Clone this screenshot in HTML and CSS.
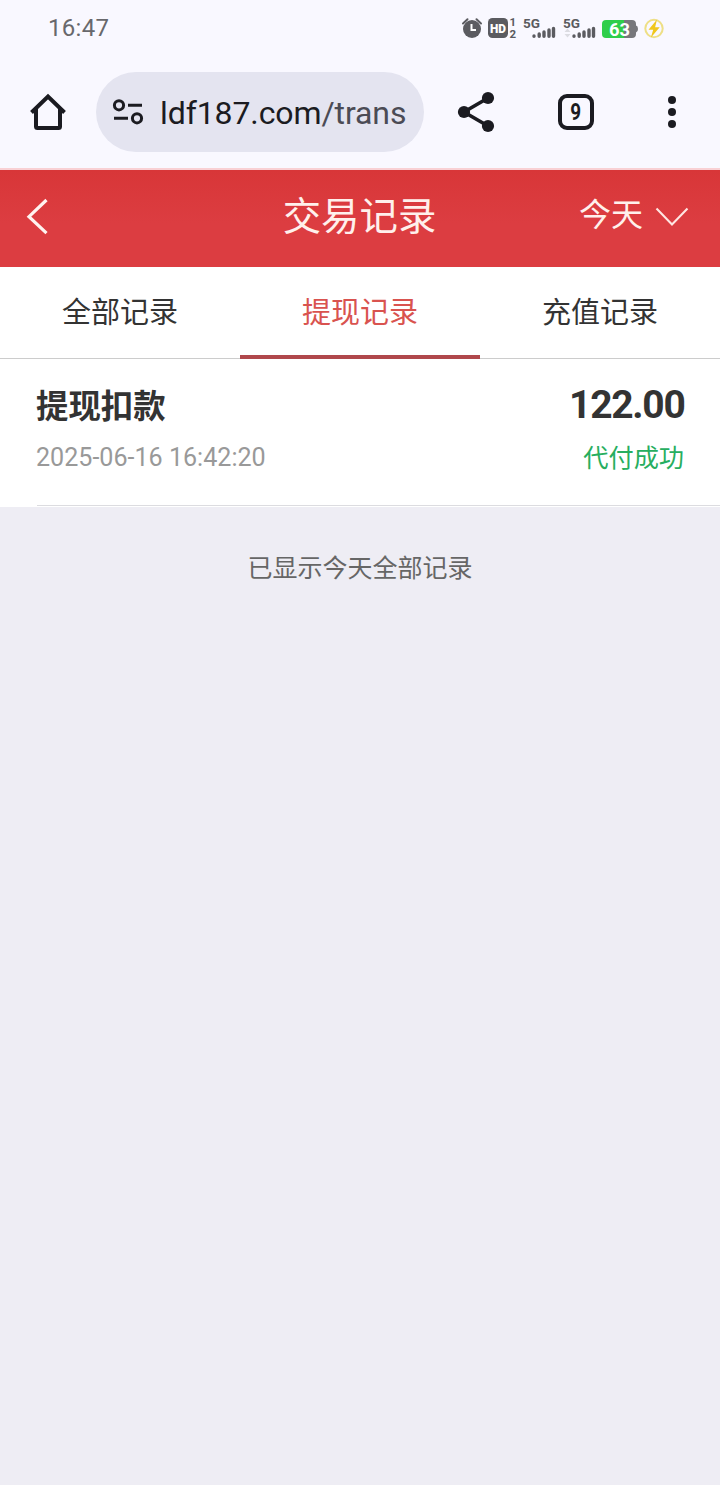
FILE: index.html
```html
<!DOCTYPE html>
<html lang="zh-CN">
<head>
    <meta charset="UTF-8">
    <meta name="viewport" content="width=device-width, initial-scale=1.0">
    <title>交易记录</title>
    <link rel="stylesheet" href="styles.css">
</head>
<body>

    <div class="status-bar">
        <span class="clock">16:47</span>
        <svg class="status-icons" width="206" height="32" viewBox="460 12 206 32">
            <!-- alarm -->
            <circle cx="472" cy="29" r="9" fill="#5b5b60"/>
            <path d="M463 23.5l4.5-4.2M481 23.5l-4.5-4.2" stroke="#5b5b60" stroke-width="2" stroke-linecap="round"/>
            <path d="M471.5 24v6h4.5" stroke="#fff" stroke-width="2" fill="none"/>
            <!-- HD -->
            <rect x="488" y="18" width="20" height="20" rx="4.5" fill="#5b5b60"/>
            <text class="hd" x="498" y="32.5" text-anchor="middle" textLength="16" lengthAdjust="spacingAndGlyphs">HD</text>
            <text class="sim" x="509.5" y="26">1</text>
            <text class="sim" x="509.5" y="37.5">2</text>
            <!-- signal 1 -->
            <text class="net" x="523" y="27.5" textLength="17" lengthAdjust="spacingAndGlyphs">5G</text>
            <path d="M534 36v.3M539.2 34v2.3M544 32v4.3M549 30v6.3M553.5 28.5v7.8" stroke="#5b5b60" stroke-width="3.4" stroke-linecap="round"/>
            <!-- signal 2 -->
            <text class="net" x="563" y="27.5" textLength="17" lengthAdjust="spacingAndGlyphs">5G</text>
            <path d="M564.5 32l3-3.5 3 3.5zM564.5 34l3 3.5 3-3.5z" fill="#dcdce2"/>
            <path d="M574 36v.3M579.2 34v2.3M584 32v4.3M589 30v6.3M593.5 28.5v7.8" stroke="#5b5b60" stroke-width="3.4" stroke-linecap="round"/>
            <!-- battery -->
            <path d="M624 20h8q4 0 4 4v1.5q2 .4 2 3.5t-2 3.5V34q0 4-4 4h-8z" fill="#77777c"/>
            <path d="M606 20h18v18h-18q-4 0-4-4V24q0-4 4-4z" fill="#2fce4a"/>
            <text class="battery" x="619.5" y="35.5" text-anchor="middle" textLength="21" lengthAdjust="spacingAndGlyphs">63</text>
            <circle cx="654" cy="28.5" r="8.7" fill="none" stroke="#eedf86" stroke-width="2"/>
            <path d="M657 19.5l-8.5 10.3h4.7l-2.4 8 8.9-10.5h-4.6z" fill="#f0c71c"/>
        </svg>
    </div>

    <div class="browser-bar">
        <svg class="home" width="40" height="40" viewBox="28 92 40 40">
            <path d="M31.5 112.5L48 96.5l16.5 16M36 109v17.5q0 1.5 1.5 1.5h21q1.5 0 1.5-1.5V109" fill="none" stroke="#1b1b21" stroke-width="4"/>
        </svg>
        <div class="url-box">
            <svg width="32" height="28" viewBox="112 98 32 28">
                <g fill="none" stroke="#1b1b21" stroke-width="3">
                    <circle cx="119" cy="105.3" r="4.6"/>
                    <circle cx="137" cy="118.3" r="4.6"/>
                    <path d="M128 105.3h14M114 118.3h14"/>
                </g>
            </svg>
            <span class="url">ldf187.com<span class="path">/trans</span></span>
        </div>
        <svg class="share" width="40" height="42" viewBox="456 91 40 42">
            <path d="M488 98l-24 14 24 14" fill="none" stroke="#1b1b21" stroke-width="3.6"/>
            <circle cx="488" cy="98" r="6.1" fill="#1b1b21"/>
            <circle cx="464" cy="112" r="6.1" fill="#1b1b21"/>
            <circle cx="488" cy="126" r="6.1" fill="#1b1b21"/>
        </svg>
        <div class="tab-count"><span>9</span></div>
        <div class="menu"><i></i><i></i><i></i></div>
    </div>

    <div class="app-header">
        <svg class="back" width="24" height="38" viewBox="26 198 24 38">
            <path d="M46.5 200L29 216.7l17.5 16.5" fill="none" stroke="#fff3f0" stroke-width="3.2"/>
        </svg>
        <span class="title">交易记录</span>
        <div class="filter">
            <span>今天</span>
            <svg width="34" height="20" viewBox="655 207 34 20">
                <path d="M656.5 208.5L672 224.5l15.5-16" fill="none" stroke="#ffe6e2" stroke-width="2.1"/>
            </svg>
        </div>
    </div>

    <div class="tabs">
        <div class="tab">全部记录</div>
        <div class="tab active">提现记录</div>
        <div class="tab">充值记录</div>
    </div>

    <div class="record">
        <div class="row">
            <span class="name">提现扣款</span>
            <span class="amount">122.00</span>
        </div>
        <div class="row">
            <span class="date">2025-06-16 16:42:20</span>
            <span class="state">代付成功</span>
        </div>
    </div>

    <div class="list-end">已显示今天全部记录</div>

</body>
</html>
```
FILE: styles.css
```css
* { box-sizing: border-box; }
body { background: #eeedf4; color: #333; font-family: Roboto, "Noto Sans CJK SC", sans-serif; margin: 0; }
svg { display: block; flex: none; }

.status-bar { background: #f9f8ff; height: 56px; padding: 0 54px 0 48px; display: flex; justify-content: space-between; align-items: center; }
.clock { font-size: 24px; color: #68686c; letter-spacing: 0.3px; }
.status-icons text { font-family: Roboto, sans-serif; font-weight: 700; fill: #5b5b60; }
.status-icons .hd { font-size: 12.5px; font-weight: 900; fill: #fff; }
.status-icons .sim { font-size: 11.5px; }
.status-icons .net { font-size: 13px; }
.status-icons .battery { font-size: 18px; fill: #fff; }

.browser-bar { background: #f9f8ff; height: 114px; border-bottom: 2px solid #f9d0d4; padding: 0 44px 0 28px; display: flex; align-items: center; }
.url-box { background: #e4e4f0; width: 328px; height: 80px; border-radius: 40px; margin-left: 28px; padding-left: 16px; display: flex; align-items: center; gap: 16px; }
.url { font-size: 32px; color: #1b1b21; letter-spacing: -0.1px; padding-top: 2px; white-space: nowrap; }
.path { color: #4b4b55; }
.share { margin-left: 32px; }
.tab-count {
    width: 36px; height: 36px; border: 4px solid #1b1b21; border-radius: 9px; margin-left: 62px;
    display: flex; align-items: center; justify-content: center; font-size: 23px; font-weight: 700; color: #1b1b21;
}
.tab-count span { transform: scaleX(0.82); }
.menu { width: 8px; margin-left: auto; display: flex; flex-direction: column; align-items: center; gap: 4px; }
.menu i { width: 8px; height: 8px; border-radius: 50%; background: #1b1b21; }

.app-header {
    background: linear-gradient(#d83638, #dc3d41 55%); color: #fff0ec; height: 97px; padding: 0 31px 4px 26px;
    display: grid; grid-template-columns: 1fr auto 1fr; align-items: center;
}
.title { font-size: 38.4px; padding: 0 0 8px 4px; }
.filter { display: flex; align-items: center; justify-content: flex-end; gap: 12px; font-size: 32px; }
.filter span { padding-bottom: 9px; }

.tabs { background: #fff; height: 92px; border-bottom: 1px solid #ccc; display: flex; }
.tab { flex: 1; height: 92px; line-height: 92px; text-align: center; font-size: 29px; }
.active { color: #d9534f; border-bottom: 4px solid #b0484c; }

.record { background: #fff; height: 148px; padding: 20px 36px 0; position: relative; }
.record::after { content: ""; position: absolute; left: 37px; right: 0; bottom: 1px; height: 1px; background: #dcdce0; }
.row { display: flex; justify-content: space-between; align-items: center; height: 52px; }
.name { font-size: 32.4px; font-weight: 700; padding-bottom: 4px; }
.amount { font-size: 39px; font-weight: 700; letter-spacing: -1.3px; margin-right: -0.5px; }
.date { font-size: 25.1px; color: #999; }
.state { font-size: 25.2px; color: #27ae60; padding-bottom: 3px; }

.list-end { margin-top: 43px; text-align: center; font-size: 25px; line-height: 38px; color: #666; }
```
